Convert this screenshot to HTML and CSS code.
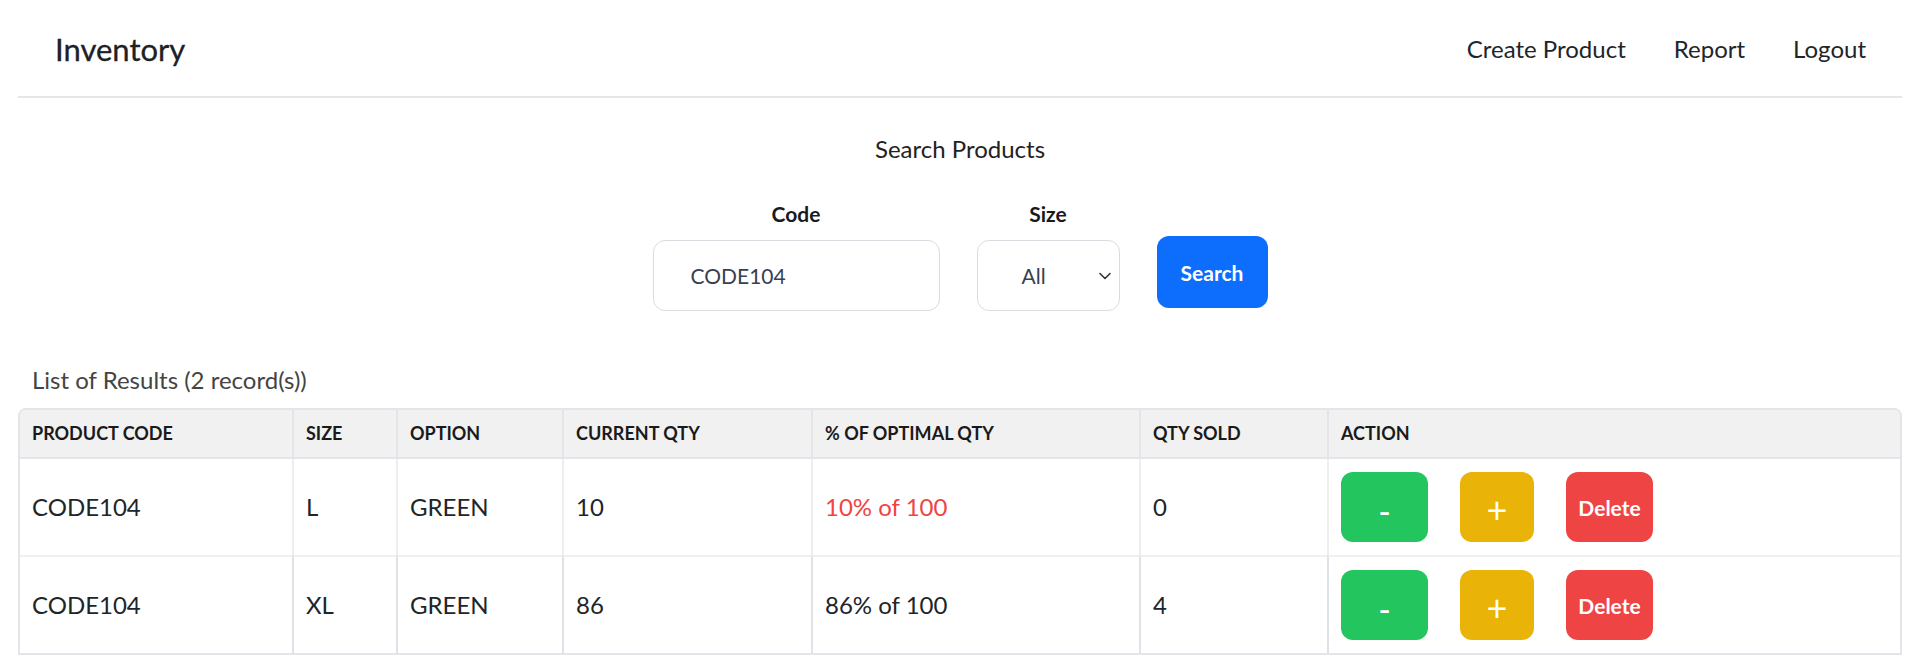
FILE: index.html
```html
<!DOCTYPE html>
<html lang="en">
<head>
<meta charset="utf-8">
<title>Inventory</title>
<link rel="stylesheet" href="styles.css">
</head>
<body>
<div class="page">
  <nav class="navbar">
    <a class="brand">Inventory</a>
    <div class="nav-links">
      <a class="nav-link">Create Product</a>
      <a class="nav-link">Report</a>
      <a class="nav-link">Logout</a>
    </div>
  </nav>

  <section class="search">
    <h2 class="search-title">Search Products</h2>
    <form class="search-form">
      <div class="field">
        <label class="field-label">Code</label>
        <input class="input" type="text" value="CODE104">
      </div>
      <div class="field">
        <label class="field-label">Size</label>
        <div class="select">
          <span>All</span>
          <svg class="chevron" width="12" height="8" viewBox="0 0 12 8"><polyline points="1,1.5 6,6.5 11,1.5" fill="none" stroke="#333" stroke-width="1.6" stroke-linecap="round" stroke-linejoin="round"/></svg>
        </div>
      </div>
      <button class="btn-search" type="button">Search</button>
    </form>
  </section>

  <div class="results-title">List of Results (2 record(s))</div>

  <table class="results">
    <thead>
      <tr>
        <th class="c1">PRODUCT CODE</th>
        <th class="c2">SIZE</th>
        <th class="c3">OPTION</th>
        <th class="c4">CURRENT QTY</th>
        <th class="c5">% OF OPTIMAL QTY</th>
        <th class="c6">QTY SOLD</th>
        <th class="c7">ACTION</th>
      </tr>
    </thead>
    <tbody>
      <tr>
        <td>CODE104</td>
        <td>L</td>
        <td>GREEN</td>
        <td>10</td>
        <td class="low">10% of 100</td>
        <td>0</td>
        <td>
          <div class="actions">
            <button class="btn btn-dec" type="button">-</button>
            <button class="btn btn-inc" type="button">+</button>
            <button class="btn btn-del" type="button">Delete</button>
          </div>
        </td>
      </tr>
      <tr>
        <td>CODE104</td>
        <td>XL</td>
        <td>GREEN</td>
        <td>86</td>
        <td>86% of 100</td>
        <td>4</td>
        <td>
          <div class="actions">
            <button class="btn btn-dec" type="button">-</button>
            <button class="btn btn-inc" type="button">+</button>
            <button class="btn btn-del" type="button">Delete</button>
          </div>
        </td>
      </tr>
    </tbody>
  </table>
</div>
</body>
</html>
```

FILE: styles.css
```css
* { box-sizing: border-box; }
html, body { margin: 0; background: #ffffff; }
body {
  font-family: Lato, "Liberation Sans", sans-serif;
  color: #212529;
}
.page { padding: 0 18px; }

/* navbar */
.navbar {
  display: flex;
  justify-content: space-between;
  align-items: center;
  height: 98px;
  padding: 2px 36px 0 37px;
  border-bottom: 2px solid #e6e6e6;
}
.brand { font-size: 31px; line-height: 36px; color: #1d2125; -webkit-text-stroke: 0.3px #1d2125; }
.nav-links { display: flex; gap: 48px; }
.nav-link { font-size: 24px; line-height: 32px; color: #212529; }

/* search */
.search {
  display: flex;
  flex-direction: column;
  align-items: center;
  padding-top: 35px;
}
.search-title {
  margin: 0;
  font-size: 24px;
  font-weight: 400;
  line-height: 32px;
  color: #222;
}
.search-form {
  display: flex;
  align-items: flex-end;
  gap: 37px;
  margin-top: 35px;
}
.field {
  display: flex;
  flex-direction: column;
  align-items: center;
  gap: 12px;
}
.field-label { font-size: 21px; font-weight: 700; line-height: 28px; color: #1a1a1a; }
.input {
  width: 287px;
  height: 71px;
  border: 1px solid #d9dce1;
  border-radius: 12px;
  padding: 0 0 0 37px;
  font-family: Lato, "Liberation Sans", sans-serif;
  font-size: 21px;
  color: #374151;
  outline: none;
}
.select {
  width: 143px;
  height: 71px;
  border: 1px solid #d9dce1;
  border-radius: 12px;
  display: flex;
  align-items: center;
  justify-content: space-between;
  padding: 0 8px 0 44px;
  font-size: 21px;
  color: #374151;
}
.btn-search {
  width: 111px;
  height: 72px;
  margin-bottom: 3px;
  background: #0d6efd;
  color: #ffffff;
  border: 0;
  border-radius: 12px;
  font-family: Lato, "Liberation Sans", sans-serif;
  font-size: 21px;
  font-weight: 700;
}

/* results */
.results-title {
  margin-top: 53px;
  padding-left: 14px;
  font-size: 24px;
  line-height: 32px;
  color: #444;
}
.results {
  margin-top: 12px;
  width: 1884px;
  table-layout: fixed;
  border-collapse: separate;
  border-spacing: 0;
  border: 2px solid #e2e5e9;
  border-radius: 8px 8px 0 0;
}
.results th {
  background: #f1f1f1;
  text-align: left;
  font-size: 18px;
  font-weight: 700;
  line-height: 21px;
  padding: 13px 12px;
  border-bottom: 2px solid #e2e5e9;
  color: #1a1a1a;
}
.results th:first-child { border-top-left-radius: 6px; }
.results th:last-child { border-top-right-radius: 6px; }
.results th + th { border-left: 2px solid #e2e5e9; }
.results td {
  padding: 13px 12px;
  height: 96px;
  font-size: 24px;
  line-height: 30px;
  vertical-align: middle;
  color: #212529;
}
.results td + td { border-left: 2px solid #dfe2e6; }
.results tbody tr:first-child td + td { border-left-color: #eeeeee; }
.results tbody tr + tr td { border-top: 2px solid #f0f0f0; }
.c1 { width: 272px; }
.c2 { width: 104px; }
.c3 { width: 166px; }
.c4 { width: 249px; }
.c5 { width: 328px; }
.c6 { width: 188px; }
.c7 { width: 573px; }
.results td.low { color: #ef4444; }

.actions { display: flex; gap: 32px; }
.btn {
  height: 70px;
  border: 0;
  border-radius: 12px;
  color: #ffffff;
  font-family: Lato, "Liberation Sans", sans-serif;
  font-weight: 700;
  padding: 0;
}
.btn-dec { width: 87px; background: #22c55e; font-size: 34px; font-weight: 400; padding-top: 6px; }
.btn-inc { width: 74px; background: #eab308; font-size: 36px; font-weight: 400; padding-top: 4px; }
.btn-del { width: 87px; background: #ef4444; font-size: 21px; }
```
